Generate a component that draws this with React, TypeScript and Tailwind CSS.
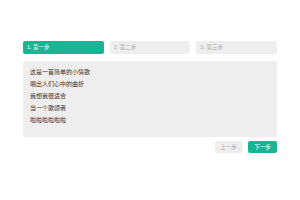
export default function App() {
  const steps = ["1. 第一步", "2. 第二步", "3. 第三步"];
  const lines = ["这是一首简单的小情歌", "唱出人们心中的曲折", "我想我很适合", "当一个歌颂者", "啦啦啦啦啦啦"];
  return (
    <div
      className="w-[300px] h-[200px] bg-white px-[23px] pt-[41px]"
      style={{ fontFamily: '"Liberation Sans", "Noto Sans CJK SC", sans-serif' }}
    >
      {/* steps */}
      <div className="flex gap-[6px]">
        {steps.map((s, i) => (
          <div
            key={s}
            className={`flex-1 h-[13px] rounded-[2px] flex items-center px-[4px] text-[5.5px] ${
              i === 0 ? "bg-[#1ab394] text-white" : "bg-[#eeeeee] text-[#aaaaaa]"
            }`}
          >
            {s}
          </div>
        ))}
      </div>

      {/* content */}
      <div className="mt-[7px] h-[76px] bg-[#eeeeee] rounded-[2px] pl-[7px] pt-[5px] text-[6px] leading-[12px] text-[#333333]">
        {lines.map((l) => (
          <div key={l}>{l}</div>
        ))}
      </div>

      {/* actions */}
      <div className="mt-[4px] flex justify-end gap-[6px]">
        <div className="w-[27px] h-[12px] rounded-[2px] bg-[#eeeeee] text-[#aaaaaa] text-[5.5px] flex items-center justify-center">
          上一步
        </div>
        <div className="w-[29px] h-[12px] rounded-[2px] bg-[#1ab394] text-white text-[5.5px] flex items-center justify-center">
          下一步
        </div>
      </div>
    </div>
  );
}
